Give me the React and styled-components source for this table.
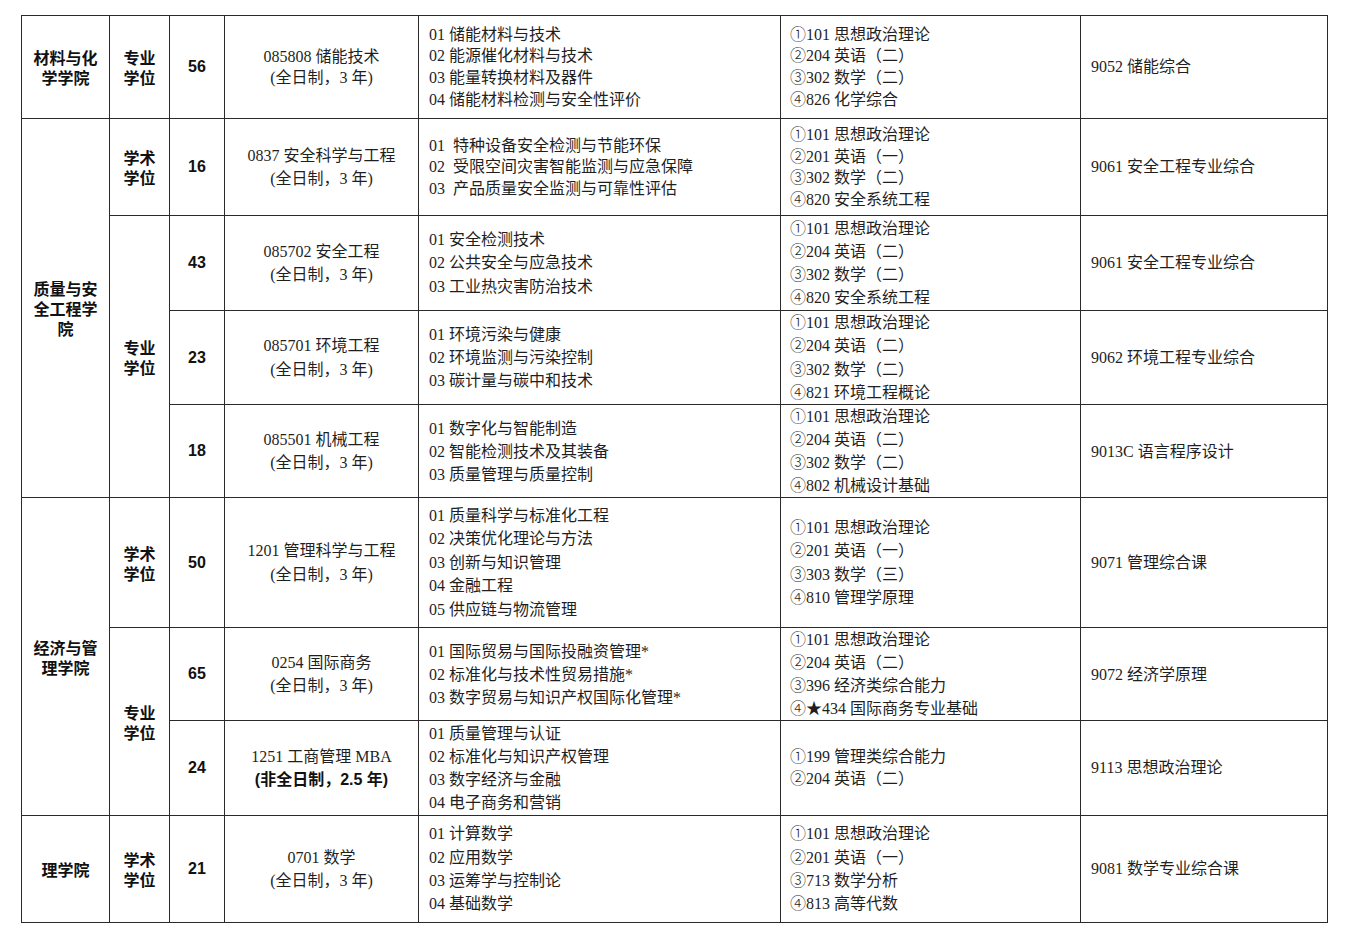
import React from "react";
import styled, { createGlobalStyle } from "styled-components";

const GlobalStyle = createGlobalStyle`
  html, body {
    margin: 0;
    padding: 0;
    background: #fff;
  }
  body {
    font-family: "Liberation Serif", "Noto Sans CJK SC", serif;
    color: #1f1f1f;
  }
`;

// Data: one entry per table row; span fields only on the first row of a group
const rows = [
  {
    college: "材料与化学学院", collegeSpan: 1,
    degree: "专业学位", degreeSpan: 1,
    quota: "56", height: 103, lh: 21.7,
    program: ["085808 储能技术", "(全日制，3 年)"],
    directions: ["01 储能材料与技术", "02 能源催化材料与技术", "03 能量转换材料及器件", "04 储能材料检测与安全性评价"],
    exams: ["①101 思想政治理论", "②204 英语（二）", "③302 数学（二）", "④826 化学综合"],
    retest: "9052 储能综合",
  },
  {
    college: "质量与安全工程学院", collegeSpan: 4,
    degree: "学术学位", degreeSpan: 1,
    quota: "16", height: 97, lh: 21.5,
    program: ["0837 安全科学与工程", "(全日制，3 年)"],
    directions: ["01  特种设备安全检测与节能环保", "02  受限空间灾害智能监测与应急保障", "03  产品质量安全监测与可靠性评估"],
    exams: ["①101 思想政治理论", "②201 英语（一）", "③302 数学（二）", "④820 安全系统工程"],
    retest: "9061 安全工程专业综合",
  },
  {
    degree: "专业学位", degreeSpan: 3,
    quota: "43", height: 95, lh: 23.2,
    program: ["085702 安全工程", "(全日制，3 年)"],
    directions: ["01 安全检测技术", "02 公共安全与应急技术", "03 工业热灾害防治技术"],
    exams: ["①101 思想政治理论", "②204 英语（二）", "③302 数学（二）", "④820 安全系统工程"],
    retest: "9061 安全工程专业综合",
  },
  {
    quota: "23", height: 94, lh: 23.2,
    program: ["085701 环境工程", "(全日制，3 年)"],
    directions: ["01 环境污染与健康", "02 环境监测与污染控制", "03 碳计量与碳中和技术"],
    exams: ["①101 思想政治理论", "②204 英语（二）", "③302 数学（二）", "④821 环境工程概论"],
    retest: "9062 环境工程专业综合",
  },
  {
    quota: "18", height: 93, lh: 23,
    program: ["085501 机械工程", "(全日制，3 年)"],
    directions: ["01 数字化与智能制造", "02 智能检测技术及其装备", "03 质量管理与质量控制"],
    exams: ["①101 思想政治理论", "②204 英语（二）", "③302 数学（二）", "④802 机械设计基础"],
    retest: "9013C 语言程序设计",
  },
  {
    college: "经济与管理学院", collegeSpan: 3,
    degree: "学术学位", degreeSpan: 1,
    quota: "50", height: 130, lh: 23.5,
    program: ["1201 管理科学与工程", "(全日制，3 年)"],
    directions: ["01 质量科学与标准化工程", "02 决策优化理论与方法", "03 创新与知识管理", "04 金融工程", "05 供应链与物流管理"],
    exams: ["①101 思想政治理论", "②201 英语（一）", "③303 数学（三）", "④810 管理学原理"],
    retest: "9071 管理综合课",
  },
  {
    degree: "专业学位", degreeSpan: 2,
    quota: "65", height: 93, lh: 23,
    program: ["0254 国际商务", "(全日制，3 年)"],
    directions: ["01 国际贸易与国际投融资管理*", "02 标准化与技术性贸易措施*", "03 数字贸易与知识产权国际化管理*"],
    exams: ["①101 思想政治理论", "②204 英语（二）", "③396 经济类综合能力", "④★434 国际商务专业基础"],
    retest: "9072 经济学原理",
  },
  {
    quota: "24", height: 95, lh: 23.2,
    program: ["1251 工商管理 MBA"],
    programBold: "(非全日制，2.5 年)",
    directions: ["01 质量管理与认证", "02 标准化与知识产权管理", "03 数字经济与金融", "04 电子商务和营销"],
    exams: ["①199 管理类综合能力", "②204 英语（二）"],
    examLh: 22,
    retest: "9113 思想政治理论",
  },
  {
    college: "理学院", collegeSpan: 1,
    degree: "学术学位", degreeSpan: 1,
    quota: "21", height: 107, lh: 23.3,
    program: ["0701 数学", "(全日制，3 年)"],
    directions: ["01 计算数学", "02 应用数学", "03 运筹学与控制论", "04 基础数学"],
    exams: ["①101 思想政治理论", "②201 英语（一）", "③713 数学分析", "④813 高等代数"],
    retest: "9081 数学专业综合课",
  },
];

const splitLabel = (text) => {
  if (text === "质量与安全工程学院") return ["质量与安", "全工程学", "院"];
  if (text.length > 4) return [text.slice(0, 4), text.slice(4)];
  return [text];
};

// circled digits render in the CJK face so they keep full width
const ExamLine = ({ text }) => (
  <Line>
    <Circled>{text[0]}</Circled>
    {text.slice(1)}
  </Line>
);

export default function App() {
  return (
    <>
      <GlobalStyle />
      <Page>
        <Table>
          <colgroup>
            <col style={{ width: 88 }} />
            <col style={{ width: 60 }} />
            <col style={{ width: 55 }} />
            <col style={{ width: 194 }} />
            <col style={{ width: 362 }} />
            <col style={{ width: 300 }} />
            <col style={{ width: 247 }} />
          </colgroup>
          <tbody>
            {rows.map((r, i) => (
              <Row key={i} $height={r.height}>
                {r.college && (
                  <HeadCell rowSpan={r.collegeSpan}>
                    {splitLabel(r.college).map((t) => (
                      <div key={t}>{t}</div>
                    ))}
                  </HeadCell>
                )}
                {r.degree && (
                  <HeadCell rowSpan={r.degreeSpan}>
                    <div>{r.degree.slice(0, 2)}</div>
                    <div>{r.degree.slice(2)}</div>
                  </HeadCell>
                )}
                <QuotaCell>{r.quota}</QuotaCell>
                <Cell $center $lh={i === 0 ? 21 : 23.5}>
                  {r.program.map((t) => (
                    <Line key={t}>{t}</Line>
                  ))}
                  {r.programBold && <BoldLine>{r.programBold}</BoldLine>}
                </Cell>
                <Cell $lh={r.lh}>
                  {r.directions.map((t) => (
                    <Line key={t}>{t}</Line>
                  ))}
                </Cell>
                <Cell $lh={r.examLh || r.lh} $pad={9}>
                  {r.exams.map((t) => (
                    <ExamLine key={t} text={t} />
                  ))}
                </Cell>
                <Cell $lh={r.lh}>
                  <Line>{r.retest}</Line>
                </Cell>
              </Row>
            ))}
          </tbody>
        </Table>
      </Page>
    </>
  );
}

// Styled Components

const Page = styled.div`
  padding: 15px 0 0 21px;
`;

const Table = styled.table`
  border-collapse: collapse;
  table-layout: fixed;
  width: 1306px;
  border: 1.5px solid #111;
`;

const Row = styled.tr`
  height: ${(p) => p.$height}px;
`;

const Cell = styled.td`
  border: 1.5px solid #2a2a2a;
  padding: 0 ${(p) => p.$pad || 10}px;
  vertical-align: middle;
  text-align: ${(p) => (p.$center ? "center" : "left")};
  font-size: 16px;
  line-height: ${(p) => p.$lh}px;
  white-space: pre;
  overflow: hidden;
`;

const HeadCell = styled.td`
  border: 1.5px solid #2a2a2a;
  padding: 0;
  text-align: center;
  vertical-align: middle;
  font-family: "Noto Sans CJK SC", sans-serif;
  font-weight: 700;
  font-size: 16px;
  line-height: 20px;
  color: #111;
`;

const QuotaCell = styled.td`
  border: 1.5px solid #2a2a2a;
  padding: 0;
  text-align: center;
  vertical-align: middle;
  font-family: "Liberation Sans", sans-serif;
  font-weight: 700;
  font-size: 16px;
  color: #111;
`;

const Line = styled.div``;

const Circled = styled.span`
  font-family: "Noto Sans CJK SC", sans-serif;
  font-weight: 300;
  line-height: 1;
`;

const BoldLine = styled.div`
  font-family: "Liberation Sans", "Noto Sans CJK SC", sans-serif;
  font-weight: 700;
  color: #111;
`;
